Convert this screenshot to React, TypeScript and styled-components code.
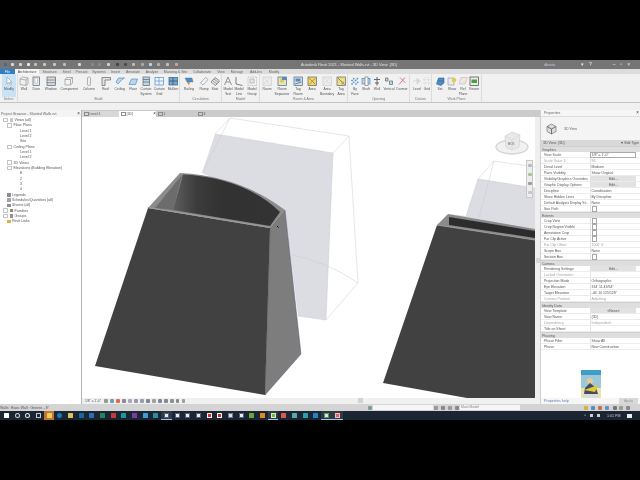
import React from 'react';
import styled, { createGlobalStyle } from 'styled-components';

const Global = createGlobalStyle`
  html, body { margin: 0; padding: 0; background: #000; }
  body { width: 640px; height: 480px; overflow: hidden; font-family: "Liberation Sans", Arial, sans-serif; }
`;
const Page = styled.div`
  width: 640px; height: 480px; display: flex; flex-direction: column; background: #000; overflow: hidden; filter: blur(0.35px);
`;
const Letterbox = styled.div`height: 60px; flex: none; background: #000;`;
const TitleBar = styled.div`
  height: 9px; flex: none; background: #757575; display: flex; align-items: center; position: relative;
`;
const QuickAccess = styled.div`display: flex; align-items: center; width: 301px; height: 9px; padding-left: 2px; box-sizing: border-box;`;
const QuickSlot = styled.div<{ $w: number }>`width: ${p => p.$w}px; display: flex; justify-content: center; flex: none;`;
const TitleText = styled.div`font-size: 3.9px; color: #e4e4e4; white-space: nowrap; width: 243px;`;
const UserText = styled.div`font-size: 3.7px; color: #c4c8e0; white-space: nowrap; width: 32px;`;
const WinControls = styled.div`display: flex; gap: 5px; align-items: center; margin-left: 5px; color: #eee; font-size: 5px; line-height: 9px;`;
const TabRow = styled.div`height: 5px; flex: none; background: #dcdcdc; display: flex; align-items: stretch;`;
const RibbonTab = styled.div<{ $w: number; $active?: boolean; $file?: boolean }>`
  width: ${p => p.$w}px; flex: none; display: flex; align-items: center; justify-content: center; font-size: 3.5px; white-space: nowrap;
  background: ${p => (p.$active ? '#f6f6f6' : p.$file ? '#2f7fc4' : 'transparent')};
  color: ${p => (p.$active ? '#444' : p.$file ? '#e8f2fb' : '#666')};
`;
const Ribbon = styled.div`height: 29px; flex: none; background: #f1f1f1; border-bottom: 1px solid #c4c4c4; box-sizing: border-box; display: flex;`;
const RibbonPanel = styled.div<{ $w: number }>`
  width: ${p => p.$w}px; flex: none; box-sizing: border-box; border-right: 1px solid #dcdcdc; display: flex; flex-direction: column;
`;
const ToolRow = styled.div`height: 23px; display: flex; flex: none;`;
const PanelName = styled.div`flex: 1; font-size: 3.5px; color: #777; text-align: center; line-height: 4px;`;
const Tool = styled.div<{ $w: number; $sel?: boolean }>`
  width: ${p => p.$w}px; flex: none; display: flex; flex-direction: column; align-items: center; padding-top: 2px; box-sizing: border-box;
  background: ${p => (p.$sel ? '#c9e2f6' : 'transparent')};
`;
const ToolLabel = styled.div`font-size: 3.4px; line-height: 4.6px; color: #555; white-space: pre; text-align: center; margin-top: 1px;`;
const RibbonGap = styled.div`height: 7px; flex: none; background: #f0f0f0;`;
const Main = styled.div`height: 294px; flex: none; display: flex; background: #fff;`;
const Browser = styled.div`width: 82px; flex: none; background: #fff; border-right: 1px solid #b4b4b4; box-sizing: border-box; display: flex; flex-direction: column;`;
const PaneHead = styled.div`height: 7px; flex: none; display: flex; align-items: center; justify-content: space-between; padding: 0 1px 0 1px; font-size: 3.6px; color: #666; background: #f4f4f4; white-space: nowrap;`;
const CloseMark = styled.span`font-size: 4.5px; color: #333; line-height: 4px;`;
const Tree = styled.div`padding-top: 0.5px; display: flex; flex-direction: column;`;
const TreeRow = styled.div<{ $indent: number }>`
  height: 5.33px; display: flex; align-items: center; gap: 1px; padding-left: ${p => p.$indent}px; font-size: 3.6px; color: #555; white-space: nowrap; flex: none;
`;
const Expander = styled.span`width: 2.6px; height: 2.6px; border: 0.5px solid #c4c4c4; flex: none; margin-right: 1px;`;
const TreeIcon = styled.span<{ $c: string }>`width: 3.5px; height: 3.5px; background: ${p => p.$c}; flex: none; margin-right: 0.5px;`;
const Center = styled.div`width: 458px; flex: none; display: flex; flex-direction: column;`;
const ViewTabs = styled.div`height: 7px; flex: none; background: #cbcbcb; display: flex; padding-top: 1px; box-sizing: border-box;`;
const ViewTab = styled.div<{ $w: number; $active?: boolean; $pale?: boolean }>`
  width: ${p => p.$w}px; flex: none; padding-left: 2px; box-sizing: border-box; display: flex; align-items: center; justify-content: space-between; font-size: 3.4px; color: #555;
  background: ${p => (p.$active ? '#fff' : p.$pale ? '#d8d8d8' : 'transparent')};
`;
const TabGlyph = styled.span`width: 2.5px; height: 2.5px; border: 0.5px solid #8a8a8a; margin-right: 1px; flex: none;`;
const TabName = styled.span`display: flex; align-items: center; flex: 1;`;
const CanvasRow = styled.div`height: 281px; flex: none; display: flex; position: relative;`;
const Scene = styled.svg`width: 453px; height: 281px; display: block; flex: none;`;
const VScroll = styled.div`width: 5px; flex: none; background: #efefef; display: flex; flex-direction: column; align-items: center; padding-top: 141px; box-sizing: border-box;`;
const VThumb = styled.div`width: 4px; height: 5px; background: #d6d6d6;`;
const NavBar = styled.div`position: absolute; left: 444px; top: 43px; width: 7px; height: 38px; background: #eeeeee; border: 0.5px solid #c8c8c8; box-sizing: border-box; display: flex; flex-direction: column; align-items: center; justify-content: space-around;`;
const NavDot = styled.span<{ $c: string }>`width: 4px; height: 3px; background: ${p => p.$c}; border-radius: 1px;`;
const ViewBar = styled.div`height: 6px; flex: none; background: #f0f0f0; display: flex; align-items: center; position: relative; font-size: 3.3px; color: #555;`;
const ViewBarGlyphs = styled.div`display: flex; align-items: center; margin-left: 3px; gap: 2.4px;`;
const ScaleText = styled.span`margin-left: 3px; white-space: nowrap;`;
const HThumb = styled.div`position: absolute; left: 276px; top: 0; width: 5px; height: 5px; background: #d2d2d2;`;
const ViewGlyph = styled.span<{ $c: string }>`width: 3.6px; height: 3.6px; background: ${p => p.$c}; display: block; flex: none; border-radius: 1px;`;
const Props = styled.div`width: 100px; flex: none; background: #fff; border-left: 1px solid #cfcfcf; box-sizing: border-box; display: flex; flex-direction: column;`;
const PropsHead = styled(PaneHead)`height: 7px; padding-left: 3px; background: #f6f6f6; border-bottom: 0.5px solid #ddd; box-sizing: border-box;`;
const TypeBox = styled.div`height: 23px; flex: none; display: flex; align-items: center; gap: 7px; padding-left: 5px; font-size: 3.5px; color: #666; background: #f4f4f4;`;
const InstanceRow = styled.div`height: 6px; flex: none; background: #d8d8d8; display: flex; align-items: center; justify-content: space-between; padding: 0 1px 0 2px; font-size: 3.5px; color: #555;`;
const Section = styled.div`height: 6px; flex: none; background: #dedede; display: flex; align-items: center; padding-left: 1px; font-size: 3.5px; color: #555; border-top: 0.5px solid #cfcfcf; box-sizing: border-box;`;
const PropRow = styled.div<{ $faded?: boolean }>`
  height: 6px; flex: none; display: grid; grid-template-columns: 46px 46px; padding-left: 3px; font-size: 3.5px; align-items: stretch; white-space: nowrap; box-sizing: border-box;
  color: ${p => (p.$faded ? '#a4a4a4' : '#555')}; border-bottom: 0.5px solid #ececec;
`;
const PropLabel = styled.div`display: flex; align-items: center; overflow: hidden;`;
const PropValue = styled.div<{ $mode?: string }>`
  display: flex; align-items: center; padding-left: ${p => (p.$mode === 'button' ? 0 : '0.5px')}; border-left: 0.5px solid #e2e2e2; box-sizing: border-box;
  justify-content: ${p => (p.$mode === 'button' ? 'center' : 'flex-start')};
  background: ${p => (p.$mode === 'button' ? '#e2e2e2' : 'transparent')};
  border: ${p => (p.$mode === 'input' ? '0.5px solid #aaa' : undefined)};
`;
const Check = styled.span`width: 3.8px; height: 3.8px; border: 0.5px solid #a8a8a8; background: #fff; display: block;`;
const PropsFill = styled.div`flex: 1; display: flex; justify-content: center; align-items: flex-end; padding-left: 1px; min-height: 0;`;
const PropsFoot = styled.div`height: 6px; flex: none; display: flex; justify-content: space-between; align-items: center; padding: 0 2px 0 3px; font-size: 3.7px; color: #5a7fb4; background: #f6f6f6;`;
const ApplyBtn = styled.div`width: 19px; height: 6px; background: #d9d9d9; color: #999; display: flex; align-items: center; justify-content: center;`;
const StatusBar = styled.div`height: 7px; flex: none; background: #d4d4d4; display: flex; align-items: center; font-size: 3.5px; color: #555; white-space: nowrap;`;
const StatusText = styled.div`width: 368px; flex: none; padding-left: 0;`;
const StatusGlyph = styled.span<{ $c: string; $ml?: number }>`width: 4px; height: 4px; flex: none; background: ${p => p.$c}; margin-left: ${p => p.$ml ?? 0}px; border-radius: 1px; display: block;`;
const SearchBox = styled.div<{ $w: number; $ml: number }>`width: ${p => p.$w}px; margin-left: ${p => p.$ml}px; height: 5px; background: #f6f6f6; flex: none; padding-left: 1px; box-sizing: border-box; line-height: 5px; color: #888;`;
const Taskbar = styled.div`height: 9px; flex: none; background: #1c2532; display: flex; align-items: center; padding-left: 1px; box-sizing: border-box;`;
const TaskSlot = styled.div<{ $bg?: string; $on?: boolean }>`
  width: 10.68px; height: 9px; flex: none; display: flex; align-items: center; justify-content: center; box-sizing: border-box;
  background: ${p => p.$bg ?? (p.$on ? '#2e3848' : 'transparent')};
  border-bottom: ${p => (p.$on ? '0.5px solid #9bc7ea' : 'none')};
`;
const TaskIcon = styled.span<{ $c: string; $round?: boolean; $inner?: string }>`
  width: 5px; height: 5px; display: block; background: ${p => p.$c}; border-radius: ${p => (p.$round ? '50%' : '0.5px')};
  box-shadow: ${p => (p.$inner ? `inset 0 0 0 1px ${p.$inner}` : 'none')};
`;
const Tray = styled.div`margin-left: auto; display: flex; align-items: center; gap: 4px; color: #ccd2da; font-size: 3.6px; padding-right: 8px;`;
const TrayGlyph = styled.span<{ $w?: number }>`width: ${p => p.$w ?? 3}px; height: 3px; background: #c8ced6; display: block;`;
const ActionBox = styled.span`width: 4.6px; height: 4px; background: #e8edf2; display: block; margin-left: 3px;`;

/* small drawn ribbon icons, in a 10x10 box */
type Ico = { k: string };
const I = ({ k }: Ico) => {
  const g = '#8f959c', b = '#4d8ec9', l = '#bcd6ec', d = '#5d6670', y = '#eec84a', o = '#d98a2b';
  const draw: Record<string, React.ReactNode> = {
    cursor: <path d="M3 1 L3 8 L5 6.4 L6.4 9 L7.4 8.4 L6 6 L8 6 Z" fill="#fff" stroke={g} strokeWidth=".6" />,
    wall: <path d="M1 3 L3.5 1 L9 2 L9 8 L7 9.5 L1 8.5Z M1 3 L7 4 L9 2 M7 4 L7 9.5" fill="#f0f0f0" stroke={g} strokeWidth=".7" />,
    door: <><rect x="2" y="1" width="6.5" height="8.5" fill="#e4e6e8" stroke={d} strokeWidth=".7" /><rect x="4" y="2" width="2.5" height="5" fill="#fff" stroke={g} strokeWidth=".4" /></>,
    window: <><rect x="1" y="1" width="8.5" height="8.5" fill="#d7dadd" stroke={d} strokeWidth=".7" /><path d="M1 4 H9.5 M1 6.7 H9.5" stroke={d} strokeWidth=".6" /></>,
    comp: <path d="M2.5 1.5 H8.5 V7 L6.5 9 H1 V3.5Z M1 3.5 H6.5 V9 M6.5 3.5 L8.5 1.5" fill="#f2f2f2" stroke={g} strokeWidth=".7" />,
    column: <rect x="3.5" y="1" width="3" height="8.5" rx="1.2" fill="#f0f0f0" stroke={g} strokeWidth=".7" />,
    roof: <path d="M1 1.5 H9.5 V4 H4 V9.5 H1Z" fill="#e0e2e4" stroke={d} strokeWidth=".7" />,
    ceiling: <path d="M1 6 L3.5 2 H9.5 L7 3.5 L3 8 Z" fill={l} stroke={b} strokeWidth=".7" />,
    floor: <path d="M1 8.5 L3.5 3 H9.5 L7.5 8.5Z" fill={l} stroke={b} strokeWidth=".7" />,
    cursys: <><rect x="2" y="1" width="6.5" height="8.5" fill={l} stroke={d} strokeWidth=".7" /><path d="M2 3.5 H8.5 M2 6 H8.5" stroke={d} strokeWidth=".7" /></>,
    curgrid: <><rect x="1" y="1.5" width="8.5" height="7.5" fill="#eef5fb" stroke={b} strokeWidth=".7" /><path d="M5 1.5 V9 M1 5 H9.5" stroke={b} strokeWidth=".6" /></>,
    mullion: <><rect x="1" y="1.5" width="8.5" height="7.5" fill="#79a7cf" stroke="#305f86" strokeWidth=".7" /><path d="M5 1.5 V9 M1 5 H9.5" stroke="#305f86" strokeWidth=".9" /></>,
    rail: <><path d="M1 2 H8 L9 6 H3 Z" fill={b} stroke="#3c6f9f" strokeWidth=".4" /><path d="M3 6 L5 9.5 L6 6" fill={o} /></>,
    ramp: <path d="M1.5 7 L6.5 1.5 L9 3.5 L4 9 Z" fill="#f4f4f4" stroke={g} strokeWidth=".7" />,
    stair: <path d="M1 6 L5 1.5 L9.5 5 L5.5 9.5Z M2.5 4.5 L7 8 M4 3 L8.4 6.4" fill="#eee" stroke={d} strokeWidth=".7" />,
    mtext: <path d="M1.5 9 L5 1 L8.5 9 M3 6 H7" fill="none" stroke={g} strokeWidth="1" />,
    mline: <path d="M2 1 V8 L8.5 9.5" fill="none" stroke={d} strokeWidth=".8" />,
    mgroup: <><rect x="1" y="1" width="8.5" height="8.5" fill="none" stroke={g} strokeWidth=".5" strokeDasharray="1 .7" /><rect x="3" y="3" width="4" height="4" fill="#e6e6e6" stroke={g} strokeWidth=".5" /></>,
    room: <><rect x="1" y="1" width="8.5" height="8.5" fill="#ececec" stroke="#cfcfcf" strokeWidth=".7" /><path d="M1 9 L9 1 M1 1 L9 9" stroke="#d6d6d6" strokeWidth=".6" /></>,
    sep: <><rect x="1" y="1" width="8.5" height="8.5" fill="#dbe8d0" stroke={d} strokeWidth=".7" /><rect x="3" y="2.5" width="4" height="4" fill={y} /><rect x="5" y="1" width="4.5" height="3" fill={b} /></>,
    tag: <><rect x="1" y="1" width="8.5" height="8.5" fill="#cfe0ee" stroke={d} strokeWidth=".7" /><rect x="2.5" y="2.5" width="5" height="3" fill={b} /><path d="M2 8 L8.5 6" stroke={d} strokeWidth=".8" /></>,
    area: <><rect x="1" y="1" width="8.5" height="8.5" fill="#f3d76c" stroke={d} strokeWidth=".7" /><path d="M2 2 L8.5 8.5 M2 8.5 L8.5 2" stroke="#8a7a2e" strokeWidth=".7" /></>,
    tagarea: <><rect x="1" y="1" width="8.5" height="8.5" fill="#f0dd88" stroke={d} strokeWidth=".7" /><path d="M2 2 L8.5 8.5" stroke="#8a7a2e" strokeWidth=".9" /><circle cx="6.8" cy="7" r="1.5" fill="#9db16a" /></>,
    byface: <path d="M1.5 8.5 L8.5 1.5 M1.5 5 L4.5 2 M5.5 8.5 L9 5" stroke={b} strokeWidth="1.5" strokeDasharray="1.5 1" fill="none" />,
    shaft: <><rect x="1" y="2.5" width="8" height="5.5" fill={l} stroke={b} strokeWidth=".7" /><rect x="4" y="1" width="3" height="8.5" fill="#fff" stroke={d} strokeWidth=".6" /></>,
    wallop: <path d="M5 1 V9.5 M2 3.5 H8 M3 7 H7" stroke={d} strokeWidth="1" fill="none" />,
    vert: <path d="M1.5 2 L4 2 L4 5 L1.5 5Z M5.5 5 L8.5 5 L8.5 8.5 L5.5 8.5Z" fill={l} stroke={d} strokeWidth=".7" />,
    dormer: <path d="M2 8.5 L8 1.5 M3 1.5 L8.5 7" stroke="#d46a7a" strokeWidth=".9" fill="none" />,
    level: <path d="M1 5 H9 M5 2 L7.5 5 L5 8 Z" fill="#d8d8d8" stroke="#d0d0d0" strokeWidth=".7" />,
    grid: <path d="M3 1 V9.5 M6.5 1 V9.5 M1 3.5 H9.5 M1 7 H9.5" stroke="#d4d4d4" strokeWidth=".6" strokeDasharray="1 .5" fill="none" />,
    set: <path d="M1.5 8 L3.5 2 H9 V7 L6 9.5 Z M3.5 5 H8" fill={b} stroke="#2c5c88" strokeWidth=".6" />,
    show: <><path d="M1 2 H7 V9 H1Z" fill="#e9ebee" stroke={g} strokeWidth=".6" /><circle cx="7" cy="4" r="2.3" fill={y} /></>,
    ref: <path d="M3 1.5 H9.5 L7 8 H1Z" fill="#e8e8e8" stroke="#d8b8b8" strokeWidth=".7" />,
    viewer: <><rect x="1" y="1" width="8.5" height="8.5" fill="#e7f0e2" stroke="#444" strokeWidth=".7" /><rect x="2.5" y="3.5" width="5.5" height="3.5" fill="#4f9a49" /></>,
  };
  return (
    <svg width="10" height="10" viewBox="0 0 10 10" style={{ display: 'block', flex: 'none' }}>
      {draw[k]}
    </svg>
  );
};

const quick: [number, string][] = [
  [7, '#2f6db0'], [7, '#d7dde3'], [8, '#d5d5d5'], [8, '#e8e8e8'], [7, '#bfbfbf'], [11, '#c9c9c9'], [8, '#c9c9c9'], [12, '#bdbdbd'], [18, '#dcdcdc'],
  [8, '#8a8a8a'], [7, '#8a8a8a'], [10, '#d0d0d0'], [8, '#444'], [8, '#4a4a4a'], [9, '#bbb'], [8, '#aaa'], [8, '#b8d6f0'], [9, '#b0b0b0'], [9, '#bfbfbf'], [9, '#d0a0a0'],
];

const tabs: [string, number, string?][] = [
  ['File', 15, 'file'], ['Architecture', 24, 'active'], ['Structure', 21], ['Steel', 13], ['Precast', 17], ['Systems', 18], ['Insert', 15], ['Annotate', 20],
  ['Analyze', 18], ['Massing & Site', 29], ['Collaborate', 24], ['View', 14], ['Manage', 18], ['Add-Ins', 20], ['Modify', 16],
];

type ToolDef = [string, string, number];
type PanelDef = { name: string; w: number; tools: ToolDef[] };
const panels: PanelDef[] = [
  { name: 'Select', w: 18, tools: [['cursor', 'Modify', 14]] },
  { name: 'Build', w: 162, tools: [['wall', 'Wall', 12], ['door', 'Door', 12.5], ['window', 'Window', 16.5], ['comp', 'Component', 20.5], ['column', 'Column', 18.5], ['roof', 'Roof', 15], ['ceiling', 'Ceiling', 13.5], ['floor', 'Floor', 13], ['cursys', 'Curtain\nSystem', 13], ['curgrid', 'Curtain\nGrid', 13.5], ['mullion', 'Mullion', 14]] },
  { name: 'Circulation', w: 42, tools: [['rail', 'Railing', 18], ['ramp', 'Ramp', 12], ['stair', 'Stair', 10]] },
  { name: 'Model', w: 38, tools: [['mtext', 'Model\nText', 12], ['mline', 'Model\nLine', 10], ['mgroup', 'Model\nGroup', 16]] },
  { name: 'Room & Area', w: 88, tools: [['room', 'Room', 14], ['sep', 'Room\nSeparator', 16], ['tag', 'Tag\nRoom', 16], ['area', 'Area', 12], ['room', 'Area\nBoundary', 18], ['tagarea', 'Tag\nArea', 10]] },
  { name: 'Opening', w: 62, tools: [['byface', 'By\nFace', 14], ['shaft', 'Shaft', 8], ['wallop', 'Wall', 14], ['vert', 'Vertical', 10], ['dormer', 'Dormer', 16]] },
  { name: 'Datum', w: 22, tools: [['level', 'Level', 14], ['grid', 'Grid', 6]] },
  { name: 'Work Plane', w: 50, tools: [['set', 'Set', 16], ['show', 'Show', 8], ['ref', 'Ref\nPlane', 14], ['viewer', 'Viewer', 8]] },
];

const tree: [string, number, 'e' | 'p' | 'v' | 'l' | 'g' | 's' | 'f' | 'y' | 'n'][] = [
  ['Views (all)', 3, 'v'], ['Floor Plans', 7, 'e'], ['Level 1', 20, 'n'], ['Level 2', 20, 'n'], ['Site', 20, 'n'],
  ['Ceiling Plans', 7, 'e'], ['Level 1', 20, 'n'], ['Level 2', 20, 'n'], ['3D Views', 7, 'e'], ['Elevations (Building Elevation)', 7, 'e'],
  ['E', 20, 'n'], ['2', 20, 'n'], ['3', 20, 'n'], ['4', 20, 'n'],
  ['Legends', 7, 'l'], ['Schedules/Quantities (all)', 7, 's'], ['Sheets (all)', 7, 'l'], ['Families', 3, 'f'], ['Groups', 3, 'g'], ['Revit Links', 7, 'y'],
];

type PropDef = { t: 's'; name: string } | { t: 'r'; label: string; value?: string; mode?: string; faded?: boolean };
const r = (label: string, value?: string, mode?: string, faded?: boolean): PropDef => ({ t: 'r', label, value, mode, faded });
const s = (name: string): PropDef => ({ t: 's', name });
const propRows: PropDef[] = [
  s('Graphics'), r('View Scale', '1/8" = 1\'-0"', 'input'), r('Scale Value    1:', '96', undefined, true), r('Detail Level', 'Medium'), r('Parts Visibility', 'Show Original'),
  r('Visibility/Graphics Overrides', 'Edit...', 'button'), r('Graphic Display Options', 'Edit...', 'button'), r('Discipline', 'Coordination'), r('Show Hidden Lines', 'By Discipline'),
  r('Default Analysis Display St...', 'None'), r('Sun Path', undefined, 'check'),
  s('Extents'), r('Crop View', undefined, 'check'), r('Crop Region Visible', undefined, 'check'), r('Annotation Crop', undefined, 'check'), r('Far Clip Active', undefined, 'check'),
  r('Far Clip Offset', '1000\' 0"', undefined, true), r('Scope Box', 'None'), r('Section Box', undefined, 'check'),
  s('Camera'), r('Rendering Settings', 'Edit...', 'button'), r('Locked Orientation', undefined, undefined, true), r('Projection Mode', 'Orthographic'), r('Eye Elevation', '334\' 11 43/64"'),
  r('Target Elevation', '-46\' 10 125/128"'), r('Camera Position', 'Adjusting', undefined, true),
  s('Identity Data'), r('View Template', '<None>', 'button'), r('View Name', '{3D}'), r('Dependency', 'Independent', undefined, true), r('Title on Sheet'),
  s('Phasing'), r('Phase Filter', 'Show All'), r('Phase', 'New Construction'),
];

const task: { c: string; bg?: string; on?: boolean; round?: boolean; inner?: string }[] = [
  { c: '#fff' }, { c: '#1c2532', inner: '#cdd2d8', round: true }, { c: '#1c2532', inner: '#e6e8ea', round: true }, { c: '#1c2532', inner: '#c8ccd2' },
  { c: '#e8d060', bg: '#c27430' }, { c: '#1b78c4', round: true }, { c: '#e0c060' }, { c: '#1565a8' }, { c: '#2a70b8' }, { c: '#1f8a58' }, { c: '#c63a3a' },
  { c: '#1c9a9a' }, { c: '#7b3ea0' }, { c: '#3f9cdc' }, { c: '#2d8aa0' }, { c: '#e9edf2', on: true, inner: '#50607a' }, { c: '#e9edf2', inner: '#50607a' }, { c: '#e9edf2', inner: '#50607a' },
  { c: '#e9edf2', inner: '#50607a' }, { c: '#d42b2b', inner: '#f2f2f2' }, { c: '#c83030', inner: '#ffffff' }, { c: '#d8dde4', inner: '#6a7a94' }, { c: '#e9edf2', inner: '#50607a' },
  { c: '#6aa63c' }, { c: '#e08a20' }, { c: '#6cbf3c', on: true, inner: '#d6f0c4' }, { c: '#d85a50' }, { c: '#5aa8a8' }, { c: '#2ba0a8' }, { c: '#2a80c8' },
];

const viewGlyphs = ['#8ea08a', '#7a9ab8', '#d8704a', '#8a8a9a', '#a8a8b8', '#9a9aa8', '#90a0b0', '#808890', '#a0a0a0', '#7a8aa0', '#888', '#909090', '#888', '#a0a0a0'];

const SceneArt = () => (
  <Scene viewBox="82 117 453 281">
    <defs>
      <linearGradient id="inner" x1="173" x2="280" y1="0" y2="0" gradientUnits="userSpaceOnUse">
        <stop offset="0" stopColor="#5e5e5e" />
        <stop offset="0.22" stopColor="#3c3c3c" />
        <stop offset="0.45" stopColor="#323232" />
        <stop offset="1" stopColor="#333333" />
      </linearGradient>
    </defs>
    <rect x="82" y="117" width="453" height="281" fill="#fff" />
    {/* ghost mass, left */}
    <path d="M215 134 L333 153 L326 320 L298 316 L285 210 L202 173 Z" fill="#dcdde3" />
    <g fill="none" stroke="#c6c6cc" strokeWidth=".45">
      <path d="M215 134 L230 118 L349 136 L333 153 M230 118 L202 173 M215 134 L333 153 L326 320 M349 136 L358 283 L326 320 M298 316 L326 320" />
      <path d="M292 255 Q328 262 358 283" />
    </g>
    {/* left shape */}
    <path d="M270 228 L285 210 L301 354 L265 395 Z" fill="#7d7d7d" stroke="#555a78" strokeWidth=".5" />
    <path d="M148 208 L180 173 Q240 176 285 210 L270 228 Z" fill="#8c8c8c" />
    <path d="M155 208 L182 175 L173 210 Z" fill="#6c6c6c" />
    <path d="M183 174.5 Q245 178 280 212 L270 226 L173 210 Z" fill="url(#inner)" />
    <path d="M148 208 L270 228 L265 395 L95 366 Z" fill="#414141" />
    <path d="M148 207.5 L270 227.5" stroke="#9a9a9a" strokeWidth="1.2" fill="none" />
    <path d="M277 226 l1.5 1.5" stroke="#111" strokeWidth="1" />
    {/* ghost mass, right */}
    <path d="M466 216 L478 179 L535 188 L535 232 L448 214 Z" fill="#dcdde3" />
    <path d="M478 179 L494 161 L535 167 M494 161 L479 218 M478 179 L535 188 M478 179 L466 216" fill="none" stroke="#c6c6cc" strokeWidth=".45" />
    {/* right shape */}
    <path d="M437 225 L448 214 L535 229 L535 240 Z" fill="#8a8a8a" />
    <path d="M449 217 L535 231 L535 238 L449 225 Z" fill="#2c2c2c" />
    <path d="M437 225 L535 240 L535 398 L467 398 L383 383 Z" fill="#414141" />
    <path d="M437 225 L535 240" stroke="#9a9a9a" strokeWidth="1.1" fill="none" />
    {/* view cube */}
    <ellipse cx="512" cy="147" rx="16" ry="7" fill="#f1f1f1" stroke="#d4d4d4" strokeWidth="1.3" />
    <path d="M505 136 L512 132 L520 135 L519 147 L512 150 L506 147 Z" fill="#e9e9e9" stroke="#c2c2c2" strokeWidth=".5" />
    <path d="M505 136 L512 140 L520 135 M512 140 L512 150" fill="none" stroke="#cfcfcf" strokeWidth=".5" />
    <text x="508" y="145" fontSize="3.3" fill="#666" fontFamily="Liberation Sans">BCK</text>
  </Scene>
);

export default function App() {
  return (
    <Page>
      <Global />
      <Letterbox />
      <TitleBar>
        <QuickAccess>
          {quick.map(([w, c], i) => (
            <QuickSlot key={i} $w={w}>
              <StatusGlyph $c={c} style={{ width: 3, height: 3 }} />
            </QuickSlot>
          ))}
        </QuickAccess>
        <TitleText>Autodesk Revit 2021 - Slanted Walls.rvt - 3D View: {'{3D}'}</TitleText>
        <UserText>dbunta</UserText>
        <WinControls>
          <span>▾</span><span>?</span><span style={{ marginLeft: 16 }}>–</span><span>▫</span><span>×</span>
        </WinControls>
      </TitleBar>
      <TabRow>
        {tabs.map(([t, w, k]) => (
          <RibbonTab key={t} $w={w} $active={k === 'active'} $file={k === 'file'}>{t}</RibbonTab>
        ))}
      </TabRow>
      <Ribbon>
        {panels.map(p => (
          <RibbonPanel key={p.name} $w={p.w}>
            <ToolRow>
              {p.tools.map(([k, label, w], i) => (
                <Tool key={i} $w={w} $sel={k === 'cursor'} style={k === 'cursor' ? { marginLeft: 2 } : undefined}>
                  <I k={k} />
                  <ToolLabel>{label}</ToolLabel>
                </Tool>
              ))}
            </ToolRow>
            <PanelName>{p.name}</PanelName>
          </RibbonPanel>
        ))}
      </Ribbon>
      <RibbonGap />
      <Main>
        <Browser>
          <PaneHead>Project Browser - Slanted Walls.rvt<CloseMark>×</CloseMark></PaneHead>
          <Tree>
            {tree.map(([t, ind, k], i) => (
              <TreeRow key={i} $indent={ind}>
                {k === 'e' || k === 'v' || k === 'f' || k === 'g' ? <Expander /> : null}
                {k === 'v' ? <TreeIcon $c="#c8c8c8" /> : null}
                {k === 'l' ? <TreeIcon $c="#8e8e8e" /> : null}
                {k === 's' ? <TreeIcon $c="#9aa6b0" /> : null}
                {k === 'f' ? <TreeIcon $c="#8d8d6e" /> : null}
                {k === 'g' ? <TreeIcon $c="#909090" /> : null}
                {k === 'y' ? <TreeIcon $c="#e2b040" /> : null}
                {t}
              </TreeRow>
            ))}
          </Tree>
        </Browser>
        <Center>
          <ViewTabs>
            <ViewTab $w={37} $pale><TabName><TabGlyph />Level 1</TabName></ViewTab>
            <ViewTab $w={37} $active><TabName><TabGlyph />{'{3D}'}</TabName><CloseMark>×</CloseMark></ViewTab>
            <ViewTab $w={40}><TabName><TabGlyph />1</TabName></ViewTab>
            <ViewTab $w={40}><TabName><TabGlyph />3</TabName></ViewTab>
          </ViewTabs>
          <CanvasRow>
            <SceneArt />
            <VScroll><VThumb /></VScroll>
            <NavBar>
              <NavDot $c="#bbb" /><NavDot $c="#a9c49a" /><NavDot $c="#9a9a9a" /><NavDot $c="#c8c8c8" />
            </NavBar>
          </CanvasRow>
          <ViewBar>
            <ScaleText>1/8" = 1'-0"</ScaleText>
            <ViewBarGlyphs>
              {viewGlyphs.map((c, i) => <ViewGlyph key={i} $c={c} />)}
            </ViewBarGlyphs>
            <HThumb />
          </ViewBar>
        </Center>
        <Props>
          <PropsHead>Properties<CloseMark>×</CloseMark></PropsHead>
          <TypeBox>
            <svg width="11" height="12" viewBox="0 0 11 12">
              <path d="M5.5 1 L10 3.5 V8.5 L5.5 11 L1 8.5 V3.5 Z" fill="#dcdcdc" stroke="#777" strokeWidth=".7" />
              <path d="M1 3.5 L5.5 6 L10 3.5 M5.5 6 V11" fill="none" stroke="#555" strokeWidth=".8" />
            </svg>
            3D View
          </TypeBox>
          <InstanceRow><span>3D View: {'{3D}'}</span><span>▾ Edit Type</span></InstanceRow>
          {propRows.map((p, i) =>
            p.t === 's' ? (
              <Section key={i}>{p.name}</Section>
            ) : (
              <PropRow key={i} $faded={p.faded}>
                <PropLabel>{p.label}</PropLabel>
                <PropValue $mode={p.mode}>{p.mode === 'check' ? <Check /> : p.value}</PropValue>
              </PropRow>
            ),
          )}
          <PropsFill>
            <svg width="20" height="28" viewBox="0 0 20 28" style={{ display: 'block' }}>
              <rect width="20" height="28" fill="#e8e6a8" />
              <rect width="20" height="5" fill="#3f9ec8" />
              <rect x="0" y="5" width="20" height="13" fill="#9cc8d8" />
              <circle cx="9" cy="11" r="3" fill="#e8c8a0" />
              <path d="M4 18 L9 13 L15 18 L17 24 L3 24 Z" fill="#444c60" />
              <path d="M3 20 L17 15 L14 22 Z" fill="#e6c830" />
              <rect x="2" y="24" width="16" height="4" fill="#d8dcdc" />
            </svg>
          </PropsFill>
          <PropsFoot>Properties help<ApplyBtn>Apply</ApplyBtn></PropsFoot>
        </Props>
      </Main>
      <StatusBar>
        <StatusText>Walls : Basic Wall : Generic - 8"</StatusText>
        <StatusGlyph $c="#7ca08a" />
        <SearchBox $w={60} $ml={1} />
        <StatusGlyph $c="#999" $ml={1} />
        <StatusGlyph $c="#888" $ml={3} />
        <StatusGlyph $c="#999" $ml={3} />
        <StatusGlyph $c="#888" $ml={3} />
        <SearchBox $w={60} $ml={1}>Main Model</SearchBox>
        <StatusGlyph $c="#d8b040" $ml={64} />
        <StatusGlyph $c="#5a8ac0" $ml={3} />
        <StatusGlyph $c="#c87050" $ml={3} />
        <StatusGlyph $c="#6a90c0" $ml={3} />
        <StatusGlyph $c="#777" $ml={4} />
        <StatusGlyph $c="#999" $ml={2} />
        <StatusGlyph $c="#888" $ml={3} />
      </StatusBar>
      <Taskbar>
        {task.map((t, i) => (
          <TaskSlot key={i} $bg={t.bg} $on={t.on}>
            <TaskIcon $c={t.c} $round={t.round} $inner={t.inner} />
          </TaskSlot>
        ))}
        <TaskSlot $on><TaskIcon $c="#d8eccf" $inner="#5a9a50" /></TaskSlot>
        <TaskSlot $on><TaskIcon $c="#e06060" $inner="#f0c0c0" /></TaskSlot>
        <Tray>
          <span>^</span><TrayGlyph /><TrayGlyph /><span style={{ marginLeft: 3 }}>1:01 PM</span><ActionBox />
        </Tray>
      </Taskbar>
    </Page>
  );
}
